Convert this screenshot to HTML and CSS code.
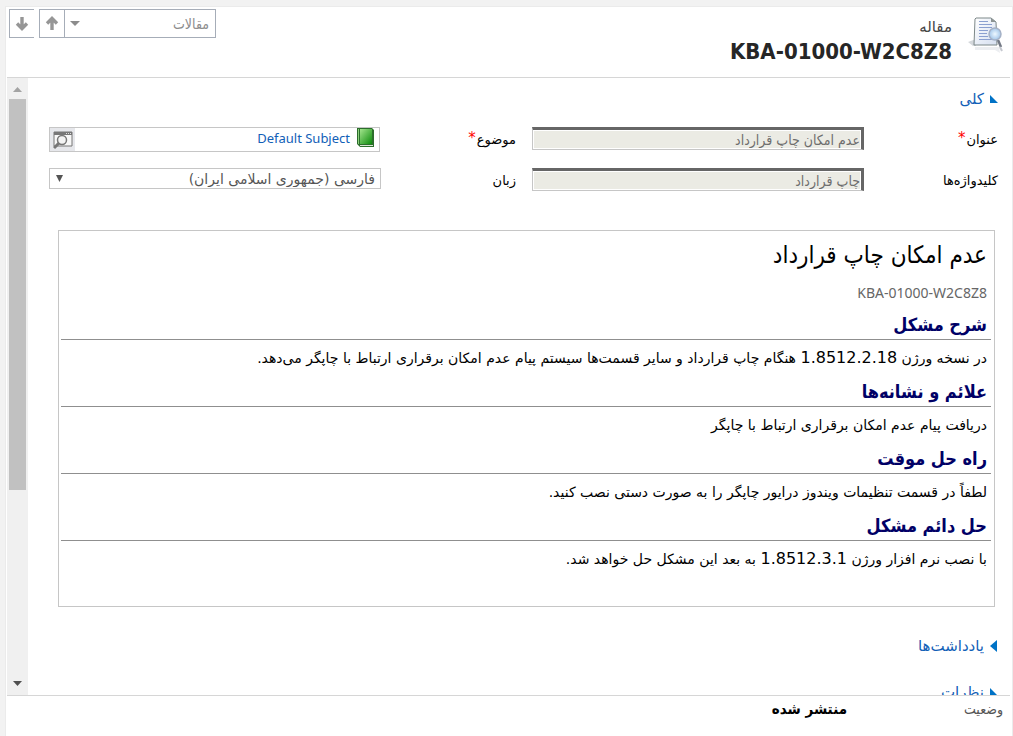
FILE: index.html
```html
<!DOCTYPE html>
<html lang="fa" dir="rtl">
<head>
    <meta charset="UTF-8">
    <meta name="viewport" content="width=device-width, initial-scale=1.0">
    <title>KBA-01000-W2C8Z8</title>
    <link rel="stylesheet" href="styles.css">
</head>
<body>

<div class="window">

    <header class="header">
        <svg class="entity-icon" width="36" height="40" viewBox="0 0 36 40">
            <defs>
                <linearGradient id="paper" x1="0" y1="0" x2="1" y2="1">
                    <stop offset="0" stop-color="#ffffff"/>
                    <stop offset="1" stop-color="#d5dff0"/>
                </linearGradient>
                <radialGradient id="lens">
                    <stop offset="0" stop-color="#eef8ff"/>
                    <stop offset="1" stop-color="#a3c6ea"/>
                </radialGradient>
            </defs>
            <path d="M0 27L8 24V31H5Z" fill="#d4d8dc"/>
            <path d="M7 32H31L32 38L27 35H7Z" fill="#eceef1"/>
            <path d="M8 3H23L28 7L29 30H6L7 4Z" fill="url(#paper)" stroke="#7d8889" stroke-width="1"/>
            <path d="M23 3V7H28Z" fill="#8b9393"/>
            <path d="M11 6.500H20M11 9.500H24M11 12.500H24M11 15.500H20M11 18.500H19M11 21.500H20M11 24.500H24" stroke="#8ba0d0"/>
            <circle cx="27" cy="19" r="6" fill="url(#lens)" stroke="#a5b1c6" stroke-width="1.500"/>
            <path d="M30 25L33 32" stroke="#737985" stroke-width="2.500"/>
            <path d="M32 32L34 36" stroke="#c5c8cf" stroke-width="2"/>
        </svg>
        <div class="header-title">
            <div class="entity-name">مقاله</div>
            <h1>KBA-01000-W2C8Z8</h1>
        </div>
        <!-- Record navigation -->
        <nav class="record-nav">
            <button type="button" class="nav-list">
                <span>مقالات</span>
                <svg width="10" height="5" viewBox="0 0 10 5"><path d="M0 0H10L5 5Z" fill="#8c8c8c"/></svg>
            </button>
            <button type="button" class="nav-up" aria-label="قبلی">
                <svg width="14" height="15" viewBox="0 0 14 15"><path d="M7 14V4M2 7.500L7 2.500L12 7.500" fill="none" stroke="#969696" stroke-width="3.400"/></svg>
            </button>
            <button type="button" class="nav-down" aria-label="بعدی">
                <svg width="14" height="15" viewBox="0 0 14 15"><path d="M7 1V11M2 7.500L7 12.500L12 7.500" fill="none" stroke="#969696" stroke-width="3.400"/></svg>
            </button>
        </nav>
    </header>

    <div class="main">
        <main class="content">
            <h2 class="section-title">
                <svg width="9" height="9" viewBox="0 0 9 9"><path d="M1 0V8H9Z" fill="#0072c6"/></svg>
                <a href="#general">کلی</a>
            </h2>

            <form class="fields" id="general">
                <label for="title">عنوان<span class="required">*</span></label>
                <input type="text" id="title" value="عدم امکان چاپ قرارداد" readonly>

                <label for="lookup">موضوع<span class="required">*</span></label>
                <div class="lookup">
                    <svg width="19" height="20" viewBox="0 0 19 20">
                        <defs>
                            <linearGradient id="book" x1="0" y1="0" x2="1" y2="1">
                                <stop offset="0" stop-color="#a3e58d"/>
                                <stop offset="1" stop-color="#0b8a0b"/>
                            </linearGradient>
                        </defs>
                        <path d="M1 0H16L18 2V19H4L1 16Z" fill="#2c6e2c"/>
                        <path d="M4 17H17V18H4Z" fill="#d9e8d4"/>
                        <path d="M4 1H16V16H4Z" fill="url(#book)"/>
                        <path d="M2.500 1V16" stroke="#8ed07d"/>
                    </svg>
                    <a href="#subject">Default Subject</a>
                    <button type="button" id="lookup" aria-label="جستجو">
                        <svg width="20" height="20" viewBox="0 0 20 20">
                            <path d="M1 2H19V16H1Z" fill="#f7f7f7" stroke="#777"/>
                            <path d="M1 2H19V5H1Z" fill="#777"/>
                            <path d="M13 3.500H18" stroke="#ddd" stroke-dasharray="1 1"/>
                            <circle cx="9" cy="10" r="4.500" fill="#f3f3f3" stroke="#777" stroke-width="1.500"/>
                            <path d="M6 13L1 18" stroke="#777" stroke-width="3"/>
                        </svg>
                    </button>
                </div>

                <label for="keywords">کلیدواژه‌ها</label>
                <input type="text" id="keywords" value="چاپ قرارداد" readonly>

                <label for="language">زبان</label>
                <div class="select-box">
                    <select id="language">
                        <option>فارسی (جمهوری اسلامی ایران)</option>
                    </select>
                    <svg width="7" height="7" viewBox="0 0 7 7"><path d="M0 0H7L3.500 7Z" fill="#555"/></svg>
                </div>
            </form>

            <article class="article">
                <h2>عدم امکان چاپ قرارداد</h2>
                <div class="article-number">KBA-01000-W2C8Z8</div>

                <h3>شرح مشکل</h3>
                <p>در نسخه ورژن <span class="version">1.8512.2.18</span> هنگام چاپ قرارداد و سایر قسمت‌ها سیستم پیام عدم امکان برقراری ارتباط با چاپگر می‌دهد.</p>

                <h3>علائم و نشانه‌ها</h3>
                <p>دریافت پیام عدم امکان برقراری ارتباط با چاپگر</p>

                <h3>راه حل موقت</h3>
                <p>لطفاً در قسمت تنظیمات ویندوز درایور چاپگر را به صورت دستی نصب کنید.</p>

                <h3>حل دائم مشکل</h3>
                <p>با نصب نرم افزار ورژن <span class="version">1.8512.3.1</span> به بعد این مشکل حل خواهد شد.</p>
            </article>

            <h2 class="section-title">
                <svg width="9" height="12" viewBox="0 0 9 12"><path d="M8 0V12L1 6Z" fill="#0072c6"/></svg>
                <a href="#notes">یادداشت‌ها</a>
            </h2>
            <h2 class="section-title">
                <svg width="9" height="9" viewBox="0 0 9 9"><path d="M1 0V8H9Z" fill="#0072c6"/></svg>
                <a href="#comments">نظرات</a>
            </h2>
        </main>

        <div class="scrollbar">
            <svg width="9" height="5" viewBox="0 0 9 5"><path d="M0 5H9L4.500 0Z" fill="#a3a3a3"/></svg>
            <div class="track"><div class="thumb"></div></div>
            <svg width="9" height="5" viewBox="0 0 9 5"><path d="M0 0H9L4.500 5Z" fill="#505050"/></svg>
        </div>
    </div>

    <footer class="footer">
        <span class="status-label">وضعیت</span>
        <strong>منتشر شده</strong>
    </footer>

</div>

</body>
</html>
```
FILE: styles.css
```css
* {
    box-sizing: border-box;
}

body {
    margin: 0;
    padding: 6px 0 0 5px;
    height: 100vh;
    background-color: #f2f2f2;
    font-family: "DejaVu Sans Condensed", "DejaVu Sans", sans-serif;
    font-size: 14px;
    line-height: 20px;
    color: #000;
}

h1, h2, h3, p {
    margin: 0;
    font-weight: normal;
}

svg {
    display: block;
    flex: none;
}

a {
    color: #1160b7;
    text-decoration: none;
}

button {
    padding: 0;
    font: inherit;
    cursor: pointer;
}

.window {
    display: flex;
    flex-direction: column;
    height: 100%;
    padding: 0 2px 0 1px;
    background-color: #fff;
    border: 1px solid #ebebeb;
    border-bottom: 0;
}

/* Header */
.header {
    display: flex;
    align-items: flex-start;
    height: 71px;
    flex: none;
    padding: 2px 6px 0 2px;
    border-bottom: 1px solid #d6d6d6;
}

.entity-icon {
    margin-top: 6px;
}

.header-title {
    flex: 1;
    padding: 8px 16px 0;
    color: #262626;
}

.entity-name {
    font-family: "DejaVu Sans", sans-serif;
    font-size: 15px;
    color: #444;
}

.header h1 {
    font-size: 22px;
    font-weight: bold;
    line-height: 30px;
}

.record-nav {
    display: flex;
}

.record-nav button {
    display: flex;
    align-items: center;
    justify-content: center;
    width: 26px;
    height: 29px;
    background-color: #fff;
    border: 1px solid #a6adb8;
    color: #8c8c8c;
}

.record-nav .nav-list {
    justify-content: space-between;
    width: 152px;
    padding: 0 6px 0 5px;
}

.record-nav .nav-up {
    width: 25px;
    border-right: 0;
}

.record-nav .nav-down {
    width: 25px;
    margin-right: 5px;
    border-right: 0;
}

/* Form */
.main {
    display: flex;
    flex: 1;
    min-height: 0;
}

.content {
    flex: 1;
    min-width: 0;
    overflow: hidden;
    padding: 11px 12px 0 21px;
}

.section-title {
    display: flex;
    align-items: center;
    gap: 5px;
    height: 20px;
    margin-bottom: 26px;
    font-family: "DejaVu Sans", sans-serif;
    font-size: 15px;
}

.fields {
    display: grid;
    grid-template-columns: 134px 1fr 151px 1fr;
    grid-auto-rows: 26px;
    row-gap: 15px;
    margin: -8px 0 36px;
}

.fields label:nth-of-type(even) {
    padding-right: 16px;
}

.fields label {
    padding-top: 3px;
    font-family: "DejaVu Sans", sans-serif;
    font-size: 13px;
}

.required {
    color: #f00;
    font-size: 15px;
    line-height: 16px;
    margin-right: 1px;
    vertical-align: top;
}

.fields input {
    width: 100%;
    height: 23px;
    padding: 0 1px;
    font: inherit;
    color: #6d6d6d;
    background-color: #ebebe4;
    border: 1px solid #c6c6c6;
    border-top: 3px solid #666;
    border-right: 3px solid #666;
    box-shadow: inset 0 0 0 1px #fff;
}

.lookup {
    display: flex;
    height: 25px;
    margin-right: 1px;
    padding-right: 4px;
    border: 1px solid #c6c6c6;
}

.lookup a {
    flex: 1;
    padding: 0 6px;
    font-family: "Noto Sans", sans-serif;
    font-size: 13px;
}

.lookup button {
    display: flex;
    align-items: center;
    justify-content: center;
    width: 25px;
    height: 23px;
    background-color: #e6e7eb;
    border: 0;
}

.select-box {
    position: relative;
    height: 21px;
}

.select-box select {
    display: block;
    width: 100%;
    height: 21px;
    padding: 0 5px;
    font-family: "DejaVu Sans", sans-serif;
    font-size: 14px;
    color: #555;
    background-color: #fff;
    border: 1px solid #c6c6c6;
    border-radius: 0;
    appearance: none;
}

.select-box svg {
    position: absolute;
    left: 7px;
    top: 7px;
}

/* Article */
.article {
    height: 377px;
    margin: 0 3px 29px 9px;
    padding: 6px 3px 0 2px;
    border: 1px solid #c6c6c6;
}

.article h2 {
    padding: 0 4px;
    font-size: 24px;
    line-height: 36px;
}

.article-number {
    height: 40px;
    padding: 10px 4px;
    font-family: "Noto Sans", sans-serif;
    color: #666;
}

.article h3 {
    height: 27px;
    padding: 0 4px;
    color: #006;
    font-size: 18px;
    font-weight: bold;
    line-height: 24px;
    border-bottom: 1px solid #8f8f8f;
}

.article p {
    height: 40px;
    padding: 8px 4px;
    font-family: "DejaVu Sans", sans-serif;
}

.version {
    font-size: 16px;
}

/* Scrollbar */
.scrollbar {
    display: flex;
    flex-direction: column;
    align-items: center;
    width: 21px;
    padding: 9px 0;
    background-color: #f0f0f0;
}

.track {
    flex: 1;
    width: 17px;
    margin: 7px 0;
}

.thumb {
    height: 68%;
    background-color: #c1c1c1;
}

/* Footer */
.footer {
    display: flex;
    height: 41px;
    flex: none;
    padding: 3px 7px 0;
    border-top: 1px solid #d6d6d6;
}

.footer strong {
    font-size: 15px;
}

.status-label {
    width: 156px;
    color: #555;
}
```
